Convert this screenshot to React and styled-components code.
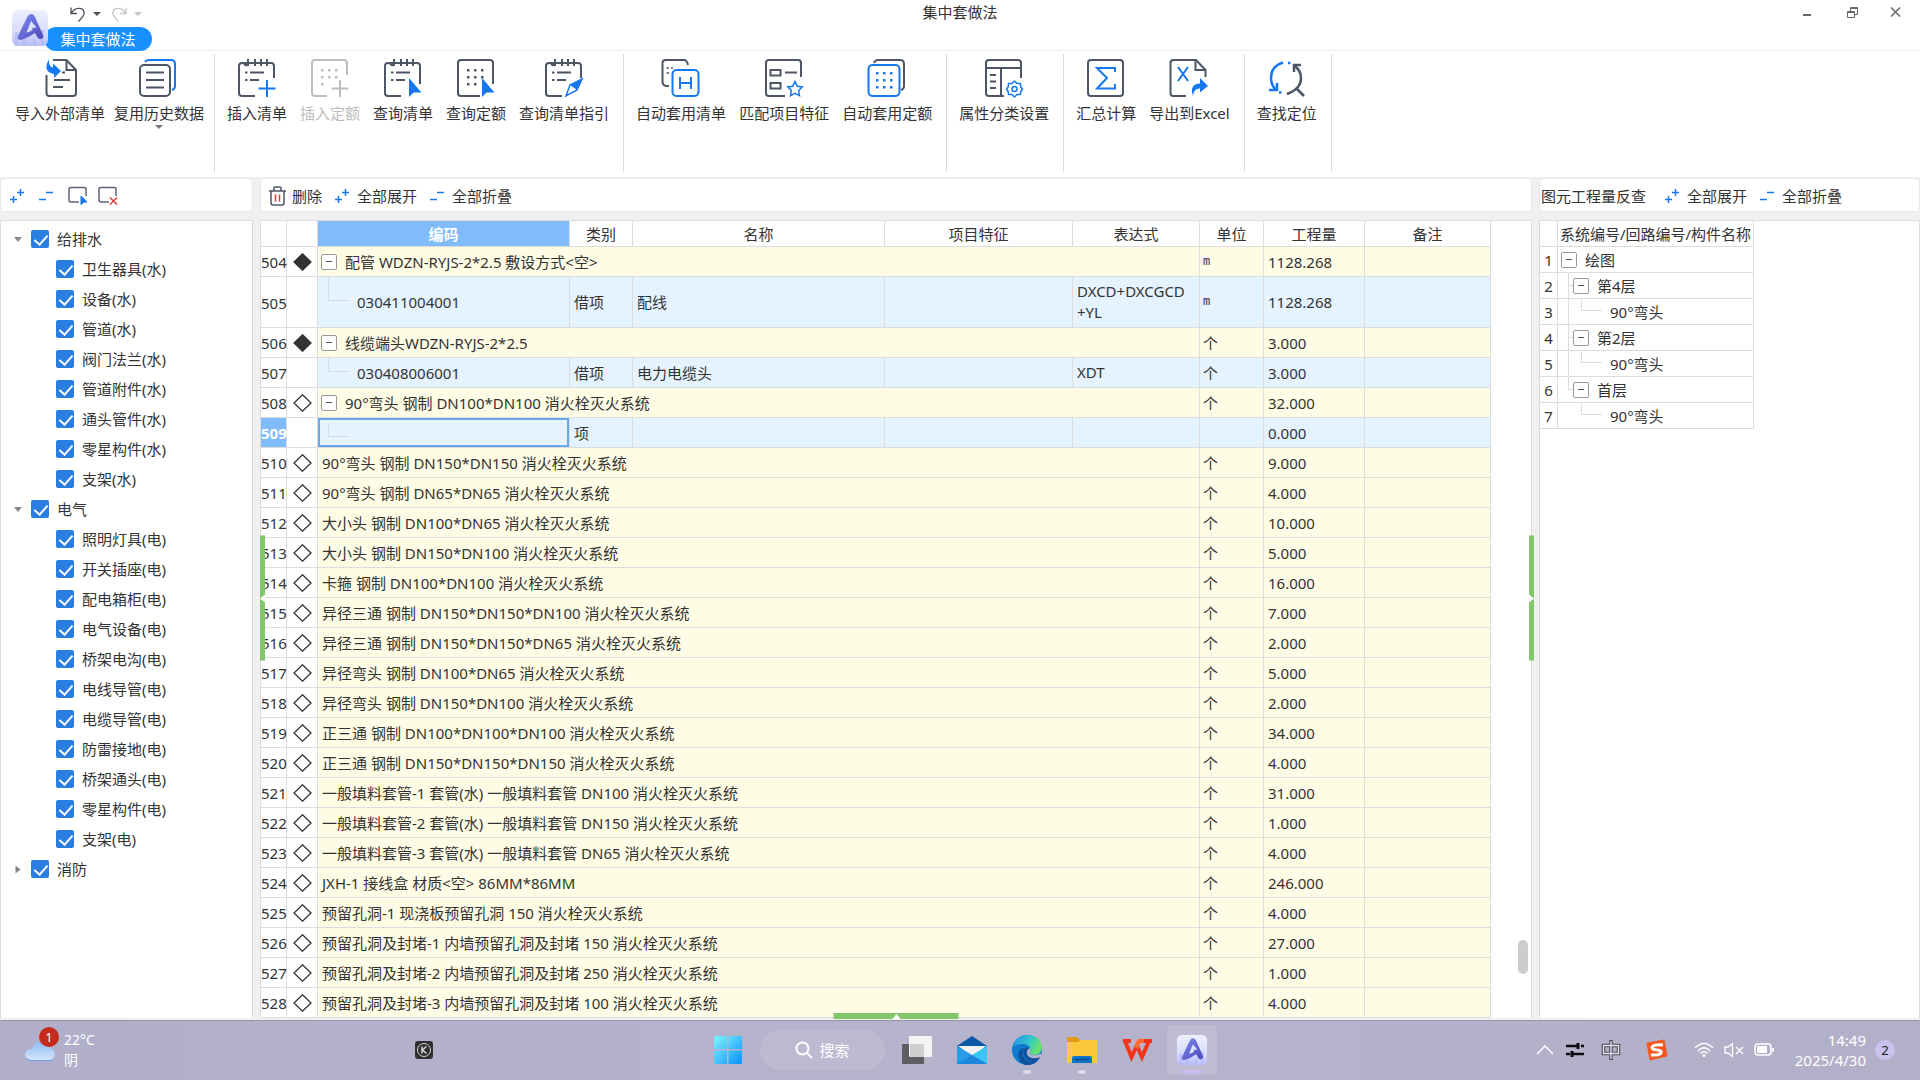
import styled, { createGlobalStyle, css } from "styled-components";

const GlobalStyle = createGlobalStyle`
  * {
    box-sizing: border-box;
  }
  body {
    margin: 0;
    font-family: "Noto Sans", "Noto Sans CJK SC", sans-serif;
    font-size: 15px;
    line-height: 20px;
    color: #333;
    background: #f0f0f0;
  }
  button {
    font: inherit;
    color: inherit;
    border: 0;
    padding: 0;
    background: none;
  }
  svg {
    display: block;
    flex: none;
  }
`;

const Page = styled.div`
  display: flex;
  flex-direction: column;
  height: 100vh;
  overflow: hidden;
`;

/* ---------- title bar ---------- */

const TitleBar = styled.header`
  display: grid;
  grid-template-columns: 1fr auto 1fr;
  height: 51px;
  background: #fff;
  border-bottom: 1px solid #ededed;
`;
const Brand = styled.div`
  display: flex;
  padding-left: 12px;
`;
const LogoBox = styled.div`
  position: relative;
  z-index: 1;
  padding-top: 10px;
`;
const BrandRight = styled.div`
  display: flex;
  flex-direction: column;
  margin-left: -4px;
`;
const QuickBar = styled.div`
  display: flex;
  align-items: center;
  gap: 10px;
  height: 27px;
  padding-left: 26px;
`;
const QuickButton = styled.button`
  display: flex;
  align-items: center;
  gap: 7px;
  color: ${(p) => (p.disabled ? "#c4c4c4" : "#4a4f5c")};
`;
const Caret = styled.span`
  border: solid transparent;
  border-width: 4px 4px 0;
  border-top-color: currentColor;
`;
const ActiveTab = styled.button`
  width: 108px;
  height: 24px;
  border-radius: 12px;
  background: #1890ff;
  color: #fff;
`;
const Title = styled.h1`
  margin: 0;
  padding-top: 2px;
  font-size: 15px;
  font-weight: 400;
`;
const WindowButtons = styled.div`
  display: flex;
  justify-content: flex-end;
  align-items: center;
  gap: 28px;
  height: 24px;
  padding-right: 16px;
`;
const WindowButton = styled.button`
  width: 16px;
  height: 16px;
  color: #666;
`;

/* ---------- ribbon ---------- */

const Ribbon = styled.nav`
  display: flex;
  height: 126px;
  padding: 3px 0 5px;
  background: #fff;
`;
const RibbonGroup = styled.div`
  display: flex;
  align-items: flex-start;
  gap: ${(p) => (p.$tight ? 9 : 13)}px;
  padding: ${(p) => (p.$tight ? "4px 10px 0 15px" : "4px 14px 0 12px")};
  border-right: 1px solid #dcdcdc;
`;
const RibbonButton = styled.button`
  display: flex;
  flex-direction: column;
  align-items: center;
  gap: 5px;
  white-space: nowrap;
  color: ${(p) => (p.disabled ? "#bdbdbd" : "#333")};

  ${Caret} {
    margin-top: -3px;
    color: #777;
  }
`;

/* ---------- panels ---------- */

const Main = styled.main`
  position: relative;
  display: flex;
  flex: 1;
  min-height: 0;
  gap: 7px;
  padding: 1px 0 2px;
`;
const Panel = styled.section`
  position: relative;
  display: flex;
  flex-direction: column;
  flex: ${(p) => (p.$width ? "none" : 1)};
  width: ${(p) => (p.$width ? p.$width + "px" : "auto")};
  min-width: 0;
`;
const Toolbar = styled.div`
  display: flex;
  align-items: center;
  gap: ${(p) => p.$gap || 13}px;
  height: 34px;
  margin-bottom: 8px;
  padding: 2px ${(p) => p.$pad || 8}px 0;
  background: #fff;
  border: 1px solid #e8e8e8;
  border-radius: 4px;
  white-space: nowrap;
`;
const ToolSet = styled.div`
  display: flex;
  gap: 10px;
`;
const PanelTitle = styled.span`
  margin-right: 6px;
`;
const ToolButton = styled.button`
  display: flex;
  align-items: center;
  gap: ${(p) => p.$gap || 8}px;
`;
const Sheet = styled.div`
  flex: 1;
  min-height: 0;
  overflow: hidden;
  background: #fff;
  border: 1px solid #dcdcdc;
  border-bottom: 0;
`;
const Tree = styled.ul`
  margin: 0;
  padding: 0;
  list-style: none;
`;
const RootTree = styled(Tree)`
  padding-top: 3px;
`;
const TreeRow = styled.div`
  display: flex;
  align-items: center;
  height: 30px;
  padding-left: ${(p) => (p.$child ? 55 : 10)}px;
`;
const Twisty = styled.button`
  display: flex;
  align-items: center;
  justify-content: center;
  width: 14px;
  height: 14px;
  margin-right: 6px;
  color: #888;

  ${Caret} {
    border-width: 5px 4px 0;
    transform: rotate(${(p) => (p.$open ? 0 : -90)}deg);
  }
`;
const CheckLabel = styled.label`
  display: flex;
  align-items: center;
  gap: 8px;
`;
const Check = styled.input`
  position: relative;
  appearance: none;
  width: 18px;
  height: 18px;
  margin: 0;
  border-radius: 2px;
  background: #2a7de1;

  &:checked::after {
    content: "";
    position: absolute;
    left: 6px;
    top: 2px;
    width: 6px;
    height: 11px;
    border: solid #fff;
    border-width: 0 2px 2px 0;
    transform: rotate(42deg);
  }
`;

/* ---------- tables ---------- */

const Grid = styled.table`
  table-layout: fixed;
  width: ${(p) => p.$width}px;
  border-collapse: separate;
  border-spacing: 0;
`;
const Head = styled.th`
  height: 26px;
  padding: 0;
  font-weight: ${(p) => (p.$active ? 700 : 400)};
  white-space: nowrap;
  border-right: 1px solid #dcdcdc;
  border-bottom: 1px solid #dcdcdc;
  ${(p) =>
    p.$active &&
    css`
      color: #fff;
      background: #80bbfb;
    `}
`;
const Cell = styled.td`
  height: ${(p) => p.$height || 30}px;
  padding: 0 0 0 4px;
  border-right: 1px solid #dcdcdc;
  border-bottom: 1px solid #dcdcdc;
  white-space: ${(p) => (p.$wrap ? "pre-line" : "nowrap")};
  line-height: ${(p) => (p.$wrap ? 21 : 20)}px;
`;
const Row = styled.tr`
  background: ${(p) => (p.$child ? "#e5f3ff" : "#fffce5")};
`;
const PlainRow = styled.tr`
  background: #fff;
`;
const NumberCell = styled(Cell)`
  padding: 1px 0 0;
  text-align: center;
  background: #fff;
  ${(p) =>
    p.$active &&
    css`
      color: #fff;
      font-weight: 700;
      background: #80bbfb;
    `}
`;
const MarkCell = styled(Cell)`
  padding: 0 0 0 6px;
  background: #fff;
`;
const UnitCell = styled(Cell)`
  padding-left: 3px;
  font-family: ${(p) => (p.$latin ? '"Liberation Mono", monospace' : '"Noto Sans CJK SC", sans-serif')};
  font-size: ${(p) => (p.$latin ? 12 : 15)}px;
`;
const CodeCell = styled(Cell)`
  padding-left: ${(p) => p.$pad}px;
  ${(p) =>
    p.$active &&
    css`
      box-shadow: inset 0 0 0 2px #6aa9e9;
    `}
  ${(p) =>
    p.$trunk &&
    css`
      background-image: linear-gradient(#d9dde0, #d9dde0), linear-gradient(#d9dde0, #d9dde0);
      background-repeat: no-repeat;
      background-size: 1px ${p.$trunk === "end" ? "50%" : "100%"}, ${p.$stub ? 5 : 0}px 1px;
      background-position: 10px 0, 10px 50%;
    `}
`;
const Branch = styled.div`
  display: flex;
  align-items: center;
`;
const Toggle = styled.button`
  display: grid;
  place-items: center;
  width: 16px;
  height: 16px;
  margin-right: 8px;
  border: 1px solid #999;
  border-radius: 2px;
  background: #fff;

  &::after {
    content: "";
    width: 6px;
    height: 1px;
    background: #555;
  }
`;
const Elbow = styled.span`
  align-self: flex-start;
  width: 21px;
  height: ${(p) => p.$rise}px;
  margin-top: ${(p) => 9 - p.$rise}px;
  margin-right: 8px;
  border-left: 1px solid #d9dde0;
  border-bottom: 1px solid #d9dde0;
`;
const ScrollThumb = styled.div`
  position: absolute;
  right: 4px;
  bottom: 44px;
  width: 10px;
  height: 34px;
  border-radius: 5px;
  background: #cdcdcd;
`;
const Grip = styled.div`
  position: absolute;
  z-index: 2;
  display: flex;
  align-items: center;
  justify-content: center;
  background: #82c76c;
  color: #fff;
  ${(p) =>
    p.$side === "bottom"
      ? css`
          left: 50%;
          bottom: -1px;
          width: 125px;
          height: 6px;
          transform: translateX(-50%);
        `
      : css`
          ${p.$side}: ${p.$side === "left" ? 0 : -2}px;
          top: 50%;
          width: 5px;
          height: 125px;
          transform: translateY(-50%);
        `}
`;

/* ---------- taskbar ---------- */

const Taskbar = styled.footer`
  display: grid;
  grid-template-columns: 1fr auto 1fr;
  align-items: center;
  height: 60px;
  padding-bottom: 1px;
  border-top: 1px solid #9795a8;
  background: linear-gradient(90deg, #b1aec9, #b6b3cd 50%, #b2afc9);
  color: #fff;
`;
const TaskLeft = styled.div`
  display: flex;
  align-items: center;
  padding-left: 24px;
`;
const Weather = styled.button`
  position: relative;
  display: flex;
  align-items: center;
  gap: 8px;
  width: 90px;
  margin-right: 301px;
  color: #fff;
  font-size: 14px;
  text-align: left;
`;
const Alert = styled.span`
  position: absolute;
  left: 15px;
  top: -3px;
  width: 20px;
  height: 20px;
  border-radius: 50%;
  background: #c42b1c;
  text-align: center;
  font-size: 13px;
`;
const TaskCenter = styled.div`
  display: flex;
  align-items: center;
  gap: 5px;
`;
const TaskButton = styled.button`
  position: relative;
  display: grid;
  place-items: center;
  width: 50px;
  height: 50px;
  border-radius: 5px;
  background: ${(p) => (p.$active ? "rgba(255,255,255,0.12)" : "none")};

  &::after {
    content: "";
    position: absolute;
    bottom: 1px;
    width: ${(p) => (p.$active ? 20 : 8)}px;
    height: ${(p) => (p.$running || p.$active ? 4 : 0)}px;
    border-radius: 2px;
    background: ${(p) => (p.$active ? "#c9bdf0" : "#dcdae8")};
  }
`;
const Search = styled.button`
  display: flex;
  align-items: center;
  justify-content: center;
  gap: 6px;
  width: 125px;
  height: 40px;
  margin: 0 2px;
  border-radius: 20px;
  background: rgba(255, 255, 255, 0.1);
  color: #fff;
`;
const Tray = styled.div`
  display: flex;
  align-items: center;
  justify-content: flex-end;
  padding-right: 25px;
`;
const TrayGroup = styled.div`
  display: flex;
  align-items: center;
  gap: ${(p) => p.$gap}px;
  margin-right: ${(p) => p.$after}px;
`;
const Clock = styled.div`
  text-align: right;
  margin-right: 9px;
`;
const Bell = styled.span`
  width: 20px;
  height: 20px;
  border-radius: 50%;
  background: #c9c2ee;
  color: #222;
  font-size: 13px;
  text-align: center;
`;

/* ---------- icons ---------- */

const INK = "#4d5566";
const BLUE = "#1677ee";

const RibbonIcon = ({ color = INK, children }) => (
  <svg width="40" height="40" viewBox="0 0 40 40" fill="none" stroke={color} strokeWidth="2">
    {children}
  </svg>
);

const Cursor = () => (
  <path d="M26 20 V39 L30.500 34.500 H38.500 Z" fill={BLUE} stroke="none" />
);

const Pad = () => (
  <>
    <path d="M18 38 H5 Q2 38 2 35 V8 Q2 5 5 5 H34 Q37 5 37 8 V20" />
    <path d="M11 1 V8 M18 1 V8 M24 1 V8 M30 1 V8" />
    <path d="M5 5 H11 V8 Q8 9 7 7 Z" fill={INK} stroke="none" />
    <path d="M8 14.500 H10.500 M13 14.500 H27 M8 22 H10.500 M13 22 H22" />
  </>
);

const Dots = ({ x, y, color = INK, last = 3 }) =>
  [0, 1, 2].map((r) =>
    [0, 1, 2].map((c) =>
      r === 2 && c >= last ? null : (
        <rect key={r + "-" + c} x={x + c * 7} y={y + r * 7} width="2.500" height="2.500" fill={color} stroke="none" />
      )
    )
  );

const icons = {
  importList: (
    <>
      <path d="M6.500 17 V35 Q6.500 38 9.500 38 H33 Q36 38 36 35 V12 L26.500 2 H13" />
      <path d="M26.500 2 V12 H36" />
      <path d="M13 29 H23 M14 22 H30 M22 14.500 H25" />
      <path d="M9 1 Q8 8 13 9.500 L13 5.500 L21 13 L14 20 L14 16 Q2 14 9 1 Z" fill={BLUE} stroke="none" />
    </>
  ),
  history: (
    <>
      <path d="M6 4 Q7 2 10 2 H32 Q36 2 36 6 V28 Q36 31 33 32" stroke={BLUE} />
      <rect x="1" y="7" width="30" height="31" rx="4" />
      <path d="M7 14.500 H25 M7 22 H25 M7 29.500 H25" />
    </>
  ),
  addList: (
    <>
      <Pad />
      <path d="M30 22 V39 M21.500 30.500 H38.500" stroke={BLUE} />
    </>
  ),
  addQuota: (
    <>
      <path d="M17 38 H5 Q2 38 2 35 V5 Q2 2 5 2 H34 Q37 2 37 5 V17" />
      <Dots x={11} y={11} color="#bdbdbd" last={1} />
      <path d="M30 22 V39 M21.500 30.500 H38.500" />
    </>
  ),
  findList: (
    <>
      <Pad />
      <path d="M37 20 V26" />
      <Cursor />
    </>
  ),
  findQuota: (
    <>
      <path d="M24 38 H5 Q2 38 2 35 V5 Q2 2 5 2 H34 Q37 2 37 5 V26" />
      <Dots x={11} y={11} last={2} />
      <Cursor />
    </>
  ),
  guide: (
    <>
      <Pad />
      <path d="M38 21 L26 27 L22 38 L33 32 Z" fill="#fff" stroke={BLUE} strokeWidth="1.500" />
      <path d="M38 21 L26 27 L33 32 Z" fill={BLUE} stroke="none" />
    </>
  ),
  autoList: (
    <>
      <path d="M8 28 H5 Q1.500 27 1.500 24 V5 Q1.500 2 4.500 2 H23 Q26 2 27 7" />
      <path d="M5.500 10 H8 M5.500 15 H8 M10 10 H12" strokeWidth="1.500" />
      <rect x="11.500" y="12" width="26" height="26" rx="4" stroke={BLUE} />
      <path d="M19 19 V31 M30 19 V31 M19 25 H30" stroke={BLUE} />
    </>
  ),
  match: (
    <>
      <path d="M21 38 H5 Q2 38 2 35 V5 Q2 2 5 2 H34 Q37 2 37 5 V19" />
      <rect x="6.500" y="12" width="10" height="5.500" />
      <rect x="6.500" y="25" width="10" height="5.500" />
      <path d="M21 14.500 H33" />
      <path
        d="M31 23.500 L33.300 28.200 L38.300 28.900 L34.700 32.500 L35.500 37.700 L31 35.300 L26.500 37.700 L27.300 32.500 L23.700 28.900 L28.700 28.200 Z"
        stroke={BLUE}
        strokeWidth="1.500"
      />
    </>
  ),
  autoQuota: (
    <>
      <path d="M7 5 Q8 2 11 2 H33 Q37 2 37 6 V28 Q37 31 34 32" />
      <rect x="1.500" y="7" width="31" height="31" rx="4" stroke={BLUE} />
      <Dots x={9} y={14} color={BLUE} />
    </>
  ),
  classify: (
    <>
      <path d="M20 38 H5 Q2 38 2 35 V5 Q2 2 5 2 H34 Q37 2 37 5 V20" />
      <path d="M2 10 H37 M17 10 V38 M6 17 H12 M6 23.500 H12 M6 30 H12" />
      <path d="M30.500 23 L33 25.500 L36.500 25.500 L36.800 29 L38.500 31 L36.800 33.500 L36.500 36.500 L33 36.500 L30.500 39 L28 36.500 L24.500 36.500 L24.200 33.500 L22.500 31 L24.200 29 L24.500 25.500 L28 25.500 Z" stroke={BLUE} strokeWidth="1.500" strokeLinejoin="round" />
      <circle cx="30.500" cy="31" r="2.500" stroke={BLUE} strokeWidth="1.500" />
    </>
  ),
  sum: (
    <>
      <rect x="2" y="2" width="35" height="36" rx="3" />
      <path d="M29 14 V10 H11 L21 20 L11 30.500 H29 V26" stroke={BLUE} />
    </>
  ),
  exportExcel: (
    <>
      <path d="M17 38 H4 Q1.500 38 1.500 35 V5 Q1.500 2 4.500 2 H27 L36.500 12 V19" />
      <path d="M26.500 2 V12 H36.500" />
      <path d="M9 9 L19 23 M19 9 L9 23" stroke={BLUE} />
      <path d="M24 38 Q20 26 31 25.500 V20 L39 28 L31 34.500 V30.500 Q25 30 24 38 Z" fill={BLUE} stroke="none" />
    </>
  ),
  locate: (
    <>
      <path d="M16 4.500 Q4 8 4 20 Q4 27 9 32 M2 32 H10 V25" stroke={BLUE} strokeWidth="2.500" />
      <path d="M21 5 H23.500 M12 34.500 H14.500" stroke={BLUE} strokeWidth="2.500" />
      <path d="M27 14 V7 H34 M28 8 Q34 13 34 20 Q34 31 20 36 M29 30 L37 38" strokeWidth="2.500" />
    </>
  ),
};

const ExpandIcon = () => (
  <svg width="14" height="16" viewBox="0 0 14 16" stroke="#1677ee" strokeWidth="1.500">
    <path d="M0 11.500 H7 M3.500 8 V15 M7 4.500 H14 M10.500 1 V8" />
  </svg>
);

const CollapseIcon = () => (
  <svg width="14" height="16" viewBox="0 0 14 16" stroke="#1677ee" strokeWidth="1.500">
    <path d="M0 11.500 H7 M7 4.500 H14" />
  </svg>
);

const BoxIcon = ({ cross }) => (
  <svg width="20" height="20" viewBox="0 0 20 20" fill="none" stroke="#5c6475" strokeWidth="1.500">
    <path d="M11 16 H3 Q1 16 1 14 V3 Q1 1.500 3 1.500 H16 Q18 1.500 18 3 V10" />
    {cross ? (
      <path d="M12 11.500 L19 18.500 M19 11.500 L12 18.500" stroke="#e5383b" />
    ) : (
      <path d="M13 10 L19 16 L16 16 L13 18.500 Z" fill={BLUE} stroke={BLUE} strokeWidth="1" />
    )}
  </svg>
);

const TrashIcon = () => (
  <svg width="17" height="20" viewBox="0 0 17 20" fill="none" stroke="#4d5566" strokeWidth="1.500">
    <path d="M0 5 H17 M2 5 V17 Q2 19 4 19 H13 Q15 19 15 17 V5 M5 5 V2 Q5 1 6 1 H11 Q12 1 12 2 V5" />
    <path d="M6.500 8.500 V15.500 M10.500 8.500 V15.500" stroke="#e5383b" />
  </svg>
);

const Logo = ({ size }) => (
  <svg width={size} height={size} viewBox="0 0 36 36" aria-hidden="true">
    <defs>
      <linearGradient id="logoBg" x1="0" y1="0" x2="0" y2="1">
        <stop offset="0" stopColor="#eef0ff" />
        <stop offset="0.600" stopColor="#d9dcfd" />
        <stop offset="1" stopColor="#b9bffa" />
      </linearGradient>
      <linearGradient id="logoInk" x1="0" y1="0" x2="1" y2="1">
        <stop offset="0" stopColor="#7f8cf0" />
        <stop offset="1" stopColor="#4c48b8" />
      </linearGradient>
    </defs>
    <rect width="36" height="36" rx="6" fill="url(#logoBg)" />
    <path d="M3 36 V22 H6 V36 M11 36 V27 H14 V36 M21 36 V29 H24 V36 M29 36 V20 H32 V36" fill="#aeb6fa" opacity="0.600" />
    <path
      d="M19 4 Q21.500 4 22.500 6 L31 25 Q32 28 29 29 Q27 29.500 25.500 27.500 L23 23 Q16 28 9 30 Q5 30 6 26 L15.500 6.500 Q17 4 19 4 Z"
      fill="url(#logoInk)"
    />
    <path d="M19 11 L14.500 22.500 Q18 22 21 19.500 L19.500 18 L24.500 17.500 Z" fill="#dfe2fe" />
  </svg>
);

const UndoIcon = ({ flip }) => (
  <svg width="16" height="16" viewBox="0 0 16 16" fill="none" stroke="currentColor" strokeWidth="1.300">
    <path
      d="M1 1.500 V7.500 H7 M1.500 7 C5 1 13 1 14 6 C15 10 11 12 8.500 15.500"
      transform={flip ? "matrix(-1 0 0 1 16 0)" : undefined}
    />
  </svg>
);

const Diamond = ({ filled }) => (
  <svg width="19" height="18" viewBox="0 0 19 18">
    <path d="M9.500 0.800 L18 9 L9.500 17.200 L1 9 Z" fill={filled ? "#333" : "#fff"} stroke="#333" strokeWidth="1.300" />
  </svg>
);

/* ---------- data ---------- */

const ribbon = [
  [
    ["importList", "导入外部清单"],
    ["history", "复用历史数据"],
  ],
  [
    ["addList", "插入清单"],
    ["addQuota", "插入定额"],
    ["findList", "查询清单"],
    ["findQuota", "查询定额"],
    ["guide", "查询清单指引"],
  ],
  [
    ["autoList", "自动套用清单"],
    ["match", "匹配项目特征"],
    ["autoQuota", "自动套用定额"],
  ],
  [["classify", "属性分类设置"]],
  [
    ["sum", "汇总计算"],
    ["exportExcel", "导出到Excel"],
  ],
  [["locate", "查找定位"]],
];

const tree = [
  {
    name: "给排水",
    items: ["卫生器具(水)", "设备(水)", "管道(水)", "阀门法兰(水)", "管道附件(水)", "通头管件(水)", "零星构件(水)", "支架(水)"],
  },
  {
    name: "电气",
    items: [
      "照明灯具(电)",
      "开关插座(电)",
      "配电箱柜(电)",
      "电气设备(电)",
      "桥架电沟(电)",
      "电线导管(电)",
      "电缆导管(电)",
      "防雷接地(电)",
      "桥架通头(电)",
      "零星构件(电)",
      "支架(电)",
    ],
  },
  { name: "消防", items: [] },
];

const columns = [26, 31, 252, 63, 252, 188, 127, 64, 101, 126];
const heads = ["", "", "编码", "类别", "名称", "项目特征", "表达式", "单位", "工程量", "备注"];

const rows = [
  { text: "配管 WDZN-RYJS-2*2.5 敷设方式<空>", open: true, filled: true, unit: "m", qty: "1128.268" },
  { child: true, code: "030411004001", kind: "借项", name: "配线", expr: "DXCD+DXCGCD\n+YL", unit: "m", qty: "1128.268", height: 51 },
  { text: "线缆端头WDZN-RYJS-2*2.5", open: true, filled: true, unit: "个", qty: "3.000" },
  { child: true, code: "030408006001", kind: "借项", name: "电力电缆头", expr: "XDT", unit: "个", qty: "3.000" },
  { text: "90°弯头 钢制 DN100*DN100 消火栓灭火系统", open: true, unit: "个", qty: "32.000" },
  { child: true, active: true, code: "", kind: "项", name: "", expr: "", unit: "", qty: "0.000" },
  { text: "90°弯头 钢制 DN150*DN150 消火栓灭火系统", unit: "个", qty: "9.000" },
  { text: "90°弯头 钢制 DN65*DN65 消火栓灭火系统", unit: "个", qty: "4.000" },
  { text: "大小头 钢制 DN100*DN65 消火栓灭火系统", unit: "个", qty: "10.000" },
  { text: "大小头 钢制 DN150*DN100 消火栓灭火系统", unit: "个", qty: "5.000" },
  { text: "卡箍 钢制 DN100*DN100 消火栓灭火系统", unit: "个", qty: "16.000" },
  { text: "异径三通 钢制 DN150*DN150*DN100 消火栓灭火系统", unit: "个", qty: "7.000" },
  { text: "异径三通 钢制 DN150*DN150*DN65 消火栓灭火系统", unit: "个", qty: "2.000" },
  { text: "异径弯头 钢制 DN100*DN65 消火栓灭火系统", unit: "个", qty: "5.000" },
  { text: "异径弯头 钢制 DN150*DN100 消火栓灭火系统", unit: "个", qty: "2.000" },
  { text: "正三通 钢制 DN100*DN100*DN100 消火栓灭火系统", unit: "个", qty: "34.000" },
  { text: "正三通 钢制 DN150*DN150*DN150 消火栓灭火系统", unit: "个", qty: "4.000" },
  { text: "一般填料套管-1 套管(水) 一般填料套管 DN100 消火栓灭火系统", unit: "个", qty: "31.000" },
  { text: "一般填料套管-2 套管(水) 一般填料套管 DN150 消火栓灭火系统", unit: "个", qty: "1.000" },
  { text: "一般填料套管-3 套管(水) 一般填料套管 DN65 消火栓灭火系统", unit: "个", qty: "4.000" },
  { text: "JXH-1 接线盒 材质<空> 86MM*86MM", unit: "个", qty: "246.000" },
  { text: "预留孔洞-1 现浇板预留孔洞 150 消火栓灭火系统", unit: "个", qty: "4.000" },
  { text: "预留孔洞及封堵-1 内墙预留孔洞及封堵 150 消火栓灭火系统", unit: "个", qty: "27.000" },
  { text: "预留孔洞及封堵-2 内墙预留孔洞及封堵 250 消火栓灭火系统", unit: "个", qty: "1.000" },
  { text: "预留孔洞及封堵-3 内墙预留孔洞及封堵 100 消火栓灭火系统", unit: "个", qty: "4.000" },
];

const lookup = [
  { level: 0, name: "绘图" },
  { level: 1, name: "第4层", trunk: "full" },
  { level: 2, name: "90°弯头", trunk: "full" },
  { level: 1, name: "第2层", trunk: "full" },
  { level: 2, name: "90°弯头", trunk: "full" },
  { level: 1, name: "首层", trunk: "end" },
  { level: 2, name: "90°弯头" },
];
const lookupPad = [3, 15, 23];

/* ---------- sections ---------- */

const Header = () => (
  <TitleBar>
    <Brand>
      <LogoBox>
        <Logo size={36} />
      </LogoBox>
      <BrandRight>
        <QuickBar>
          <QuickButton aria-label="撤销">
            <UndoIcon />
            <Caret />
          </QuickButton>
          <QuickButton aria-label="恢复" disabled>
            <UndoIcon flip />
            <Caret />
          </QuickButton>
        </QuickBar>
        <ActiveTab>集中套做法</ActiveTab>
      </BrandRight>
    </Brand>
    <Title>集中套做法</Title>
    <WindowButtons>
      <WindowButton aria-label="最小化">
        <svg width="16" height="16" stroke="currentColor" strokeWidth="2">
          <path d="M3 11 H11" />
        </svg>
      </WindowButton>
      <WindowButton aria-label="还原">
        <svg width="16" height="16" fill="none" stroke="currentColor">
          <path d="M3.500 7.500 H10.500 V13.500 H3.500 Z M3.500 8.500 H10.500 M6.500 7 V3.500 H13.500 V10.500 H11 M6.500 4.500 H13.500" />
        </svg>
      </WindowButton>
      <WindowButton aria-label="关闭">
        <svg width="16" height="16" stroke="currentColor" strokeWidth="1.500">
          <path d="M3 3.500 L12 12.500 M12 3.500 L3 12.500" />
        </svg>
      </WindowButton>
    </WindowButtons>
  </TitleBar>
);

const RibbonBar = () => (
  <Ribbon>
    {ribbon.map((group, i) => (
      <RibbonGroup key={i} $tight={i === 0}>
        {group.map(([icon, label]) => (
          <RibbonButton key={icon} disabled={icon === "addQuota"}>
            <RibbonIcon color={icon === "addQuota" ? "#bdbdbd" : INK}>{icons[icon]}</RibbonIcon>
            {label}
            {icon === "history" && <Caret />}
          </RibbonButton>
        ))}
      </RibbonGroup>
    ))}
  </Ribbon>
);

const ExpandButtons = () => (
  <>
    <ToolButton>
      <ExpandIcon />
      全部展开
    </ToolButton>
    <ToolButton>
      <CollapseIcon />
      全部折叠
    </ToolButton>
  </>
);

const CheckItem = ({ name }) => (
  <CheckLabel>
    <Check type="checkbox" defaultChecked />
    {name}
  </CheckLabel>
);

const CategoryPanel = () => (
  <Panel $width={253}>
    <Toolbar $gap={15} $pad={9}>
      <ToolButton aria-label="全部展开">
        <ExpandIcon />
      </ToolButton>
      <ToolButton aria-label="全部折叠">
        <CollapseIcon />
      </ToolButton>
      <ToolSet>
        <ToolButton aria-label="全选">
          <BoxIcon />
        </ToolButton>
        <ToolButton aria-label="取消全选">
          <BoxIcon cross />
        </ToolButton>
      </ToolSet>
    </Toolbar>
    <Sheet>
      <RootTree>
        {tree.map((node) => (
          <li key={node.name}>
            <TreeRow>
              <Twisty $open={node.items.length > 0} aria-label={node.name}>
                <Caret />
              </Twisty>
              <CheckItem name={node.name} />
            </TreeRow>
            <Tree>
              {node.items.map((item) => (
                <li key={item}>
                  <TreeRow $child>
                    <CheckItem name={item} />
                  </TreeRow>
                </li>
              ))}
            </Tree>
          </li>
        ))}
      </RootTree>
    </Sheet>
  </Panel>
);

const ListRow = ({ row, no }) => (
  <Row $child={row.child}>
    <NumberCell $height={row.height} $active={row.active}>
      {no}
    </NumberCell>
    <MarkCell>{!row.child && <Diamond filled={row.filled} />}</MarkCell>
    {row.child ? (
      <>
        <CodeCell $pad={10} $active={row.active}>
          <Branch>
            <Elbow $rise={row.height ? 24 : 14} />
            {row.code}
          </Branch>
        </CodeCell>
        <Cell>{row.kind}</Cell>
        <Cell>{row.name}</Cell>
        <Cell />
        <Cell $wrap>{row.expr}</Cell>
      </>
    ) : (
      <CodeCell colSpan={5} $pad={row.open ? 3 : 4}>
        <Branch>
          {row.open && <Toggle aria-label="折叠" />}
          {row.text}
        </Branch>
      </CodeCell>
    )}
    <UnitCell $latin={row.unit === "m"}>{row.unit}</UnitCell>
    <Cell>{row.qty}</Cell>
    <Cell />
  </Row>
);

const ListPanel = () => (
  <Panel>
    <Toolbar>
      <ToolButton $gap={6}>
        <TrashIcon />
        删除
      </ToolButton>
      <ExpandButtons />
    </Toolbar>
    <Sheet>
      <Grid $width={columns.reduce((a, b) => a + b)}>
        <colgroup>
          {columns.map((w, i) => (
            <col key={i} width={w} />
          ))}
        </colgroup>
        <thead>
          <tr>
            {heads.map((h, i) => (
              <Head key={i} $active={i === 2}>
                {h}
              </Head>
            ))}
          </tr>
        </thead>
        <tbody>
          {rows.map((row, i) => (
            <ListRow key={i} row={row} no={504 + i} />
          ))}
        </tbody>
      </Grid>
    </Sheet>
    <ScrollThumb />
    <Grip $side="left">
      <svg width="5" height="8" fill="currentColor">
        <path d="M5 0 L0 4 L5 8 Z" />
      </svg>
    </Grip>
    <Grip $side="right">
      <svg width="5" height="8" fill="currentColor">
        <path d="M0 0 L5 4 L0 8 Z" />
      </svg>
    </Grip>
    <Grip $side="bottom">
      <svg width="8" height="5" fill="currentColor">
        <path d="M0 5 L4 0 L8 5 Z" />
      </svg>
    </Grip>
  </Panel>
);

const LookupPanel = () => (
  <Panel $width={381}>
    <Toolbar $pad={1}>
      <PanelTitle>图元工程量反查</PanelTitle>
      <ExpandButtons />
    </Toolbar>
    <Sheet>
      <Grid $width={214}>
        <colgroup>
          <col width="18" />
          <col width="196" />
        </colgroup>
        <thead>
          <tr>
            <Head />
            <Head>系统编号/回路编号/构件名称</Head>
          </tr>
        </thead>
        <tbody>
          {lookup.map(({ level, name, trunk }, i) => (
            <PlainRow key={i}>
              <NumberCell $height={26}>{i + 1}</NumberCell>
              <CodeCell $height={26} $pad={lookupPad[level]} $trunk={trunk} $stub={level === 1}>
                <Branch>
                  {level < 2 ? <Toggle aria-label="折叠" /> : <Elbow $rise={12} />}
                  {name}
                </Branch>
              </CodeCell>
            </PlainRow>
          ))}
        </tbody>
      </Grid>
    </Sheet>
  </Panel>
);

const TaskbarIcons = () => (
  <TaskCenter>
    <TaskButton aria-label="开始">
      <svg width="30" height="30" viewBox="0 0 30 30">
        <defs>
          <linearGradient id="win" x1="0" y1="0" x2="1" y2="1">
            <stop offset="0" stopColor="#7df3ff" />
            <stop offset="1" stopColor="#0a93fb" />
          </linearGradient>
        </defs>
        <path d="M2 1 H14 V14 H1 V2 Z M15.500 1 H28 L29 2 V14 H15.500 Z M1 15.500 H14 V29 H2 L1 28 Z M15.500 15.500 H29 V28 L28 29 H15.500 Z" fill="url(#win)" />
      </svg>
    </TaskButton>
    <Search>
      <svg width="18" height="18" fill="none" stroke="#fff" strokeWidth="2">
        <circle cx="7.500" cy="7.500" r="6" />
        <path d="M12 12 L17 17" />
      </svg>
      搜索
    </Search>
    <TaskButton aria-label="任务视图">
      <svg width="30" height="30" viewBox="0 0 30 30">
        <rect x="0" y="9" width="22" height="20" rx="1" fill="#5e5e62" />
        <rect x="7" y="1" width="23" height="21" rx="1" fill="#f3f3f5" />
        <rect x="8" y="9" width="14" height="13" fill="#cfcfd2" />
      </svg>
    </TaskButton>
    <TaskButton aria-label="邮件">
      <svg width="30" height="30" viewBox="0 0 30 30">
        <path d="M0 11 L15 1 L30 11 V16 H0 Z" fill="#0a58a8" />
        <path d="M1 11 H29 L16 22 Z" fill="#f2f2f2" />
        <path d="M0 11 L15 20 L30 29 H0 Z" fill="#2a9be6" />
        <path d="M30 11 L15 20 L30 29 Z" fill="#38c6f4" />
        <path d="M0 29 L15 20 L30 29 Z" fill="#1a86dc" />
      </svg>
    </TaskButton>
    <TaskButton $running aria-label="Edge">
      <svg width="30" height="30" viewBox="0 0 30 30">
        <defs>
          <linearGradient id="edgeTop" x1="0" y1="0" x2="1" y2="0.400">
            <stop offset="0.200" stopColor="#2a9fe0" />
            <stop offset="0.600" stopColor="#33c7c9" />
            <stop offset="1" stopColor="#6be36a" />
          </linearGradient>
        </defs>
        <circle cx="15" cy="15" r="15" fill="#0f7bd0" />
        <path d="M1 12 Q4 0 16 0 Q29 1 30 13 Q29 20 22 20 Q17 20 18 16 Q19 9 11 9 Q4 9 1 12 Z" fill="url(#edgeTop)" />
        <path d="M12 13 Q8 20 14 25 Q20 30 27 24 Q22 31 13 30 Q4 25 7 17 Q9 13 12 13 Z" fill="#11509c" />
        <path d="M18 15 Q15 22 23 23 Q27 23 29 20 Q24 32 14 24 Q9 17 13 13 Q17 11 18 15 Z" fill="#11509c" />
        <path d="M17.500 13 Q19 16 17.500 18 Q19 21 24 20 Q30 19 30 17 L28.500 22 Q20 25 16 21 Q13 16 17.500 13 Z" fill="#b6b3cd" />
      </svg>
    </TaskButton>
    <TaskButton $running aria-label="文件资源管理器">
      <svg width="30" height="30" viewBox="0 0 30 30">
        <path d="M0 3 Q0 2 1 2 H10 L13 5 V9 H0 Z" fill="#e09a0c" />
        <path d="M0 7 H11 L14 5 H29 Q30 5 30 6 V27 Q30 28 29 28 H1 Q0 28 0 27 Z" fill="#fdc93c" />
        <path d="M5 28 V23 Q5 21 7 21 H23 Q25 21 25 23 V28 Z" fill="#0e74c4" />
        <path d="M8 24.500 H22" stroke="#0a4d8c" strokeWidth="1.500" />
      </svg>
    </TaskButton>
    <TaskButton aria-label="WPS">
      <svg width="30" height="24" viewBox="0 0 30 24" fill="none" stroke="#f5341c" strokeWidth="4">
        <path d="M1 3 H9 M3 3 L9.500 19 L16 5 M15 8 L20 19 L27 3 M20 3 H30" />
        <path d="M14 10 L17 3 H22" stroke="#ff6a2a" />
      </svg>
    </TaskButton>
    <TaskButton $active aria-label="集中套做法">
      <Logo size={30} />
    </TaskButton>
  </TaskCenter>
);

const SystemTray = () => (
  <Tray>
    <TrayGroup $gap={12} $after={20}>
      <svg width="18" height="12" fill="none" stroke="#fff" strokeWidth="1.500">
        <path d="M1 10 L9 2 L17 10" />
      </svg>
      <svg width="18" height="16" stroke="#0c0c0c" strokeWidth="2.500">
        <path d="M0 4 H13 M15 4 H18 M0 12 H4 M6 12 H18" />
        <path d="M12 1 V7 M6 9 V15" strokeWidth="3" />
      </svg>
      <svg width="30" height="20" viewBox="-6 0 30 20" fill="none">
        <path d="M1.500 5.500 H16.500 V13.500 H1.500 Z M9 0 V20" stroke="#4c4b55" strokeWidth="3.500" />
        <path d="M1.500 5.500 H16.500 V13.500 H1.500 Z M9 1 V19" stroke="#e5e4ee" strokeWidth="1.300" />
      </svg>
    </TrayGroup>
    <TrayGroup $gap={0} $after={26}>
      <svg width="22" height="22" viewBox="0 0 22 22">
        <path d="M1 4 L18 1 L21 17 L4 21 Z" fill="#f4571f" stroke="#f4571f" strokeLinejoin="round" />
        <path d="M17 6 Q7 5 6 8.500 Q6 10.500 11 11 Q16 11.500 15 14 Q13 16.500 5 16" fill="none" stroke="#fff" strokeWidth="3" />
      </svg>
    </TrayGroup>
    <TrayGroup $gap={10} $after={21}>
      <svg width="20" height="16" viewBox="0 0 20 16" fill="none" stroke="#fff" strokeWidth="1.500">
        <path d="M1 6 Q10 -3 19 6 M4 9 Q10 2.500 16 9 M6.500 11.500 Q10 8 13.500 11.500" />
        <circle cx="10" cy="13.500" r="1.500" fill="#fff" stroke="none" />
      </svg>
      <svg width="20" height="16" viewBox="0 0 20 16" fill="none" stroke="#fff" strokeWidth="1.300">
        <path d="M1 5 H4 L8.500 1.500 V14.500 L4 11 H1 Z M12 5 L19 12 M19 5 L12 12" />
      </svg>
      <svg width="20" height="14" viewBox="0 0 20 14" fill="none" stroke="#fff" strokeWidth="1.500">
        <rect x="1" y="1" width="16" height="11" rx="3" />
        <path d="M19 5 V8.500" strokeWidth="2" />
        <rect x="3" y="3" width="10" height="7" rx="1" fill="#fff" stroke="none" />
      </svg>
    </TrayGroup>
    <Clock>
      <div>14:49</div>
      <div>2025/4/30</div>
    </Clock>
    <Bell>2</Bell>
  </Tray>
);

const App = () => (
  <Page>
    <GlobalStyle />
    <Header />
    <RibbonBar />
    <Main>
      <CategoryPanel />
      <ListPanel />
      <LookupPanel />
    </Main>
    <Taskbar>
      <TaskLeft>
        <Weather>
          <svg width="32" height="22" viewBox="0 0 32 22">
            <defs>
              <linearGradient id="cloud" x1="0" y1="0" x2="0" y2="1">
                <stop offset="0" stopColor="#8fb8f5" />
                <stop offset="1" stopColor="#d3e6fd" />
              </linearGradient>
            </defs>
            <path d="M7 21 Q1 20 1 15 Q2 10 8 10 Q11 1 18 2 Q24 3 25 9 Q31 10 31 15 Q30 21 25 21 Z" fill="url(#cloud)" />
            <path d="M3 20 Q5 21.500 7 21.500 H25 Q28 21.500 29 20" fill="none" stroke="#6a9df0" />
          </svg>
          <Alert>1</Alert>
          <span>
            22°C
            <br />阴
          </span>
        </Weather>
        <svg width="18" height="18" viewBox="0 0 18 18" fill="none" stroke="#d6d6d6">
          <rect width="18" height="18" rx="3" fill="#303033" stroke="none" />
          <circle cx="9" cy="9" r="6.500" />
          <path d="M7 5.500 V12.500 M11.500 5.500 L7.500 9 L11.500 12.500" strokeWidth="1.500" />
        </svg>
      </TaskLeft>
      <TaskbarIcons />
      <SystemTray />
    </Taskbar>
  </Page>
);

export default App;
